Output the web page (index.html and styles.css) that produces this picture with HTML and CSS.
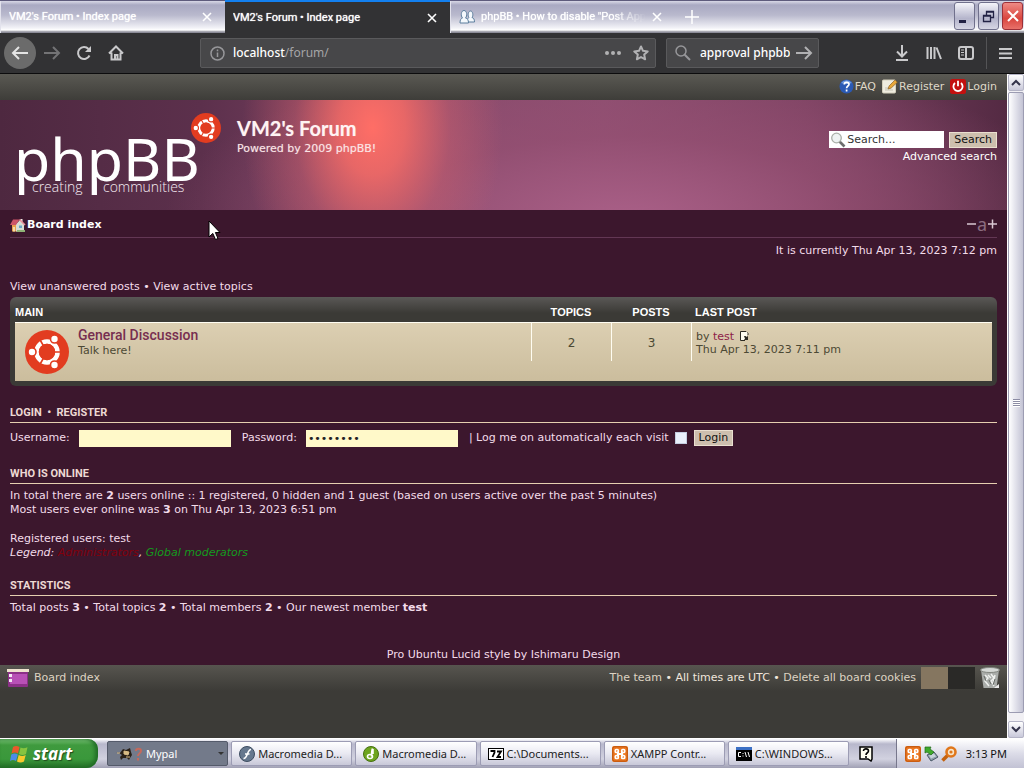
FILE: index.html
```html
<!DOCTYPE html>
<html lang="en">
<head>
<meta charset="utf-8">
<title>VM2's Forum • Index page</title>
<link rel="stylesheet" href="styles.css">
</head>
<body>
<svg class="defs" aria-hidden="true">
  <symbol id="friends" viewBox="0 0 44 44">
    <circle cx="22" cy="22" r="22" fill="#e23c20"/>
    <circle cx="22" cy="22" r="10.5" fill="none" stroke="#fff" stroke-width="4.6"/>
    <g stroke="#e23c20" stroke-width="1.6"><path d="M22 22h15M22 22L14 8M22 22l-8 14"/></g>
    <circle cx="22" cy="22" r="8.2" fill="#e23c20"/>
    <g fill="#fff" stroke="#e23c20" stroke-width="1.6"><circle cx="7" cy="22" r="4"/><circle cx="29.5" cy="9" r="4"/><circle cx="29.5" cy="35" r="4"/></g>
  </symbol>
  <symbol id="xampp" viewBox="0 0 16 16">
    <rect width="16" height="16" rx="2" fill="#ee7a24"/><rect x=".8" y=".8" width="14.4" height="14.4" rx="1.5" fill="none" stroke="#b8500c"/>
    <path d="M6 5.5v5M10 5.500v5M5.5 8h5" stroke="#fff" stroke-width="2"/><g fill="none" stroke="#fff" stroke-width="1.700"><rect x="3.300" y="3.500" width="3" height="3" rx="1"/><rect x="9.700" y="3.500" width="3" height="3" rx="1"/><rect x="3.300" y="9.500" width="3" height="3" rx="1"/><rect x="9.700" y="9.500" width="3" height="3" rx="1"/></g>
  </symbol>
  <symbol id="cross" viewBox="0 0 10 10"><path d="M1 1l8 8M9 1L1 9" stroke="currentColor" stroke-width="1.6" fill="none"/></symbol>
</svg>

<header class="tabstrip">
  <div class="tab"><span class="tab-title">VM2's Forum • Index page</span><button class="tab-close" aria-label="Close tab"><svg width="10" height="10"><use href="#cross"/></svg></button></div>
  <div class="tab active"><span class="tab-title">VM2's Forum • Index page</span><button class="tab-close" aria-label="Close tab"><svg width="10" height="10"><use href="#cross"/></svg></button></div>
  <div class="tab">
    <svg width="16" height="16" viewBox="0 0 16 16" fill="#f4f8fc" stroke="#5d7f9e" stroke-width="1"><path d="M8 12c0-2 1-3 2-3.500C8.500 7 9 2 11.500 2S14.500 7 13 8.500c1.500.500 2.500 1.500 2.500 4.500H9z"/><path d="M1 14c0-3 .800-4.500 2.500-5C1.500 7 2 1.500 5 1.500S8.500 7 6.500 9C8.500 9.500 9.500 11 9.500 14z"/></svg>
    <span class="tab-title fade">phpBB • How to disable "Post App</span><button class="tab-close" aria-label="Close tab"><svg width="10" height="10"><use href="#cross"/></svg></button></div>
  <button class="newtab" aria-label="New tab"><svg width="14" height="14" viewBox="0 0 14 14"><path d="M7 0v14M0 7h14" stroke="#fff" stroke-width="1.500"/></svg></button>
  <div class="winbtns">
    <button class="win" aria-label="Minimize"><svg width="20" height="24"><path d="M4 17.500h7" stroke="#222244" stroke-width="3"/></svg></button>
    <button class="win" aria-label="Restore"><svg width="20" height="24" fill="none" stroke="#222244" stroke-width="1.300"><path d="M7.500 11V7.500h7v6H12M7 8h8"/><path d="M4.500 11.500h7v6h-7zM4 12h8"/></svg></button>
    <button class="win red" aria-label="Close"><svg width="20" height="24"><path d="M5 7l10 10M15 7L5 17" stroke="#fff" stroke-width="2"/></svg></button>
  </div>
</header>

<nav class="toolbar">
  <button class="ib back" aria-label="Back"><svg width="18" height="16" viewBox="0 0 18 16"><path d="M17 8H2M8 2L2 8l6 6"/></svg></button>
  <button class="ib dim" aria-label="Forward"><svg width="18" height="16" viewBox="0 0 18 16"><path d="M1 8h15M10 2l6 6-6 6"/></svg></button>
  <button class="ib" aria-label="Reload"><svg width="16" height="16" viewBox="0 0 16 16"><path d="M13.500 10.500A6 6 0 1 1 12.500 4"/><path d="M15 1v6H9z" fill="currentColor" stroke="none"/></svg></button>
  <button class="ib" aria-label="Home"><svg width="16" height="16" viewBox="0 0 16 16"><path d="M1 8.500L8 1.500l7 7M3.500 7.500V14.500h9V7.500M7 14v-4h2.500v4"/></svg></button>
  <div class="urlbar">
    <svg width="15" height="15" viewBox="0 0 15 15" class="info"><circle cx="7.500" cy="7.500" r="6.500"/><path d="M7.500 6.500V11M7.500 3.500v1.700"/></svg>
    <span class="url"><b>localhost</b>/forum/</span>
    <button class="ib sm" aria-label="Page actions"><svg width="16" height="6"><g fill="currentColor" stroke="none"><circle cx="2" cy="3" r="2"/><circle cx="8" cy="3" r="2"/><circle cx="14" cy="3" r="2"/></g></svg></button>
    <button class="ib sm" aria-label="Bookmark"><svg width="16" height="16" viewBox="0 0 16 16"><path stroke-linejoin="round" d="M8 1.500l2 4.300 4.700.600-3.500 3.200.900 4.700L8 12l-4.100 2.300.900-4.700L1.300 6.400 6 5.800z"/></svg></button>
  </div>
  <div class="searchbar">
    <svg width="16" height="16" viewBox="0 0 16 16" class="info"><circle cx="6" cy="6" r="5"/><path d="M9.700 9.700L15 15" stroke-width="2"/></svg>
    <input type="text" value="approval phpbb" aria-label="Search the web">
    <button class="ib sm" aria-label="Go"><svg width="17" height="16" viewBox="0 0 17 16"><path d="M0 8h15M9 2l6 6-6 6"/></svg></button>
  </div>
  <div class="tools">
    <button class="ib" aria-label="Downloads"><svg width="14" height="16" viewBox="0 0 14 16"><path d="M7 0v11M2 6.500l5 5 5-5M1 15h12"/></svg></button>
    <button class="ib" aria-label="Library"><svg width="16" height="16" viewBox="0 0 16 16"><path d="M1.500 2v12M5 2v12M8.500 2v12M10.500 2.500l4.500 11.500"/></svg></button>
    <button class="ib" aria-label="Sidebars"><svg width="16" height="14" viewBox="0 0 16 14"><rect x="1" y="1" width="14" height="12" rx="2"/><path d="M8 1v12"/><path d="M3 4h3M3 6.500h3M3 9h3" stroke-width="1"/></svg></button>
    <button class="ib menu" aria-label="Menu"><svg width="13" height="13"><path d="M0 2h13M0 6.500h13M0 11h13"/></svg></button>
  </div>
</nav>

<div class="viewport">
  <main class="page">
    <div class="topbar">
      <a href="#"><svg width="15" height="15" viewBox="0 0 15 15"><circle cx="7.500" cy="7.500" r="7" fill="#2a59b4"/><path d="M2 4a7 7 0 0 1 11 0Q7 6 2 4" fill="#6f9ae0"/><path d="M5.300 5.500C5.300 2.500 10 2.700 10 5.300 10 7 7.600 7 7.600 9.200M7.600 10.600v1.800" fill="none" stroke="#fff" stroke-width="1.700"/></svg>FAQ</a>
      <a href="#"><svg width="16" height="15" viewBox="0 0 16 15"><rect x=".5" y="1" width="13" height="13" rx="1" fill="#efece0" stroke="#d5d0bd"/><path d="M3 9h6M3 11h8" stroke="#c5c1b2"/><path d="M6 10l1.200-3.200L13 1l2.300 2.200L9.200 9z" fill="#e9a83a" stroke="#8e6426" stroke-width=".7"/></svg>Register</a>
      <a href="#"><svg width="16" height="15" viewBox="0 0 16 15"><rect width="16" height="15" rx="2.500" fill="#c3100f"/><path d="M5 4a4.600 4.600 0 1 0 6 0M8 1.800v5.500" fill="none" stroke="#fff" stroke-width="1.800"/></svg>Login</a>
    </div>

    <div class="banner">
      <a href="#" class="logo" aria-label="phpBB creating communities">
        <svg width="211" height="90" viewBox="0 0 211 90">
          <text class="logo-name" x="4" y="70">phpBB</text>
          <text class="logo-tag" x="22" y="81">creating</text>
          <text class="logo-tag" x="93" y="81">communities</text>
          <use href="#friends" x="181" y="2" width="30" height="30"/>
        </svg>
      </a>
      <div class="site"><h1>VM2's Forum</h1><p>Powered by 2009 phpBB!</p></div>
      <form class="find">
        <div class="find-row">
          <label class="find-box"><svg width="16" height="16" viewBox="0 0 16 16"><path d="M9.500 9.500l5 5" stroke="#6d6d6d" stroke-width="2.600"/><circle cx="6.500" cy="6" r="4.800" fill="#eef3f2" stroke="#aab0a8" stroke-width="1.300"/></svg><input type="text" value="Search..." aria-label="Search keywords"></label>
          <button type="button" class="btn">Search</button>
        </div>
        <a href="#">Advanced search</a>
      </form>
    </div>

    <div class="wrap">
      <div class="crumbs">
        <a href="#"><svg width="16" height="16" viewBox="0 0 16 16"><path d="M2 8v6.500h5V8z" fill="#e8a04f"/><path d="M6 7l4-4 4 4v7.500H6z" fill="#d8ddd4"/><path d="M10.500 2h2v3h-2z" fill="#e9e6e0"/><path d="M0 8l3-5.500h6.500L6 8z" fill="#cc5568"/><path d="M9.500 2.500L15 8" stroke="#e78b98" stroke-width="1.600"/><path d="M3 10h2v4.500H3z" fill="#f6d9a5"/><path d="M9 8.500h3v2.500H9z" fill="#6aa7c6"/><path d="M7 13h8v2H7z" fill="#8fb276"/></svg>Board index</a>
        <a href="#" class="fontsize" aria-label="Change font size"><svg width="30" height="24"><path d="M0 11h9" stroke="#d9c9d3" stroke-width="1.500"/><text x="10" y="18">a</text><path d="M21 11h9M25.500 6.500v9" stroke="#d9c9d3" stroke-width="1.500"/></svg></a>
      </div>
      <p class="now">It is currently Thu Apr 13, 2023 7:12 pm</p>
      <p class="views"><a href="#">View unanswered posts</a> • <a href="#">View active topics</a></p>

      <div class="forabg">
        <table>
          <colgroup><col><col class="c-num"><col class="c-num"><col class="c-last"></colgroup>
          <thead><tr><th>Main</th><th class="mid">Topics</th><th class="mid">Posts</th><th class="lp">Last post</th></tr></thead>
          <tbody><tr>
            <td><div class="forum"><svg width="44" height="44"><use href="#friends" width="44" height="44"/></svg><div><a href="#" class="forumtitle">General Discussion</a><p>Talk here!</p></div></div></td>
            <td><div class="cell num">2</div></td>
            <td><div class="cell num">3</div></td>
            <td><div class="cell last"><p>by <a href="#">test</a> <svg width="9" height="10" viewBox="0 0 9 10"><path d="M.5.500H6l2 2V4M5 9.500H.500V.500" fill="#fffdf0" stroke="#2c2a22"/><path d="M1 1h6v7H1z" fill="#fffdf0"/><path d="M4 5h1.500l1.500 1 1-1.500V9H4l1-1.300z" fill="#2c2a22"/></svg></p><p>Thu Apr 13, 2023 7:11 pm</p></div></td>
          </tr></tbody>
        </table>
      </div>

      <h3><a href="#">Login</a>&nbsp; •&nbsp; <a href="#">Register</a></h3>
      <form class="quick">
        <label for="user">Username:</label><input id="user" class="field" type="text">
        <label for="pass" class="gap">Password:</label><input id="pass" class="field" type="password" value="password">
        <label for="auto" class="gap">| Log me on automatically each visit</label><input id="auto" class="tick" type="checkbox">
        <button type="button" class="btn">Login</button>
      </form>

      <h3>Who is online</h3>
      <p>In total there are <b>2</b> users online :: 1 registered, 0 hidden and 1 guest (based on users active over the past 5 minutes)<br>Most users ever online was <b>3</b> on Thu Apr 13, 2023 6:51 pm</p>
      <p class="legend">Registered users: <a href="#">test</a><br><em>Legend: <a href="#" class="adm">Administrators</a>, <a href="#" class="mod">Global moderators</a></em></p>

      <h3>Statistics</h3>
      <p>Total posts <b>3</b> • Total topics <b>2</b> • Total members <b>2</b> • Our newest member <a href="#"><b>test</b></a></p>
      <p class="credit">Pro Ubuntu Lucid style by <a href="#">Ishimaru Design</a></p>
    </div>

    <footer class="foot">
      <a href="#" class="foot-home"><svg width="22" height="20" viewBox="0 0 22 20"><rect x="1" y="2" width="20" height="17" rx="1" fill="#8c3088"/><rect x="3" y="6" width="17" height="10" fill="#b850b6"/><rect y="1" width="22" height="3" fill="#efe3cf"/><path d="M2 6h3v3H2zM2 11h3v3H2z" fill="#f3e6f3"/></svg>Board index</a>
      <p class="foot-links"><a href="#">The team</a> • All times are UTC • <a href="#">Delete all board cookies</a></p>
      <span class="swatches"><i class="sand"></i><i class="dark"></i></span>
      <svg class="trash" width="20" height="22" viewBox="0 0 20 22"><path d="M1 3h18l-2.500 18h-13z" fill="#a9aca9"/><ellipse cx="10" cy="3" rx="9.500" ry="2.500" fill="#d5d8d5" stroke="#82857f"/><path d="M5 8l3 3-3 3 4 5M11 7l3 4-3 3 3 5M8 8l3 3M15 8l-2 8" stroke="#eef0ee" stroke-width="1.500" fill="none"/><path d="M4 9l2 5M9 13l2 4M15 12l-2 6" stroke="#666a66" fill="none"/><path d="M14 21l5-4v4z" fill="#eee"/></svg>
    </footer>
  </main>
  <div class="scroll">
    <button aria-label="Scroll up"><svg width="10" height="7"><path d="M1 6l4-4 4 4"/></svg></button>
    <div class="thumb"><i></i></div>
    <button aria-label="Scroll down"><svg width="10" height="7"><path d="M1 1l4 4 4-4"/></svg></button>
  </div>
  <svg class="pointer" width="13" height="21" viewBox="0 0 13 21"><path d="M1 1v16l3.800-3.600L7.500 19.500l2.500-1-2.600-6H12z" fill="#fff" stroke="#000"/></svg>
</div>

<footer class="taskbar">
  <button class="start"><svg width="19" height="18" viewBox="0 0 19 18"><path d="M3 2q3-2 6.500 0L8 8.500Q5 6.500 1.500 8.500z" fill="#e9592b"/><path d="M10.500 2.500q3 1.800 7-.300L16 9q-3.500 2-7 0z" fill="#86c440"/><path d="M1.300 9.500q3.500-2 6.500 0L6 16q-3-2-6 0z" fill="#4d8be8"/><path d="M8.700 10q3.500 2 7 0L14 16.500q-3.500 2-7 0z" fill="#f8c92c"/></svg>start</button>
  <div class="tasks">
    <button class="task on"><svg width="28" height="16" viewBox="0 0 28 16"><path d="M1 6l4 1 3-4 3 1 4-2 1 4 1 3-2 3-1 2-2-2H8l-2 2-1-3 2-2-3-2z" fill="#2b2118"/><path d="M9 5l5 1-1 3-4-1zM2 7h3M11 11h4" fill="#d9bb84" stroke="#d9bb84"/><path d="M21 5C21 2 26 2 26 5c0 2.500-3 2-3 5M23 12v2.500" fill="none" stroke="#c4695c" stroke-width="2"/></svg><span>Mypal</span><i class="caret"></i></button>
    <button class="task"><svg width="16" height="16" viewBox="0 0 16 16"><circle cx="8" cy="8" r="7.500" fill="#66788e" stroke="#3d4d60"/><path d="M12 3.500c-4 0-3 9-7.500 9M6 8h4.500" fill="none" stroke="#fff" stroke-width="1.600"/></svg><span>Macromedia D...</span></button>
    <button class="task"><svg width="16" height="16" viewBox="0 0 16 16"><circle cx="8" cy="8" r="7.500" fill="#6ea51f" stroke="#457010"/><path d="M9.500 2.500c-1 2-1 4-1 8M10 3v5" fill="none" stroke="#fff" stroke-width="1.600"/><ellipse cx="7" cy="10.500" rx="2.500" ry="2" fill="none" stroke="#fff" stroke-width="1.600"/></svg><span>Macromedia D...</span></button>
    <button class="task"><svg width="16" height="12" viewBox="0 0 16 12"><rect x=".500" y=".500" width="15" height="11" fill="#fff" stroke="#000"/><path d="M2.500 3h4v1.500L4.500 9M9 3.500h4L9.500 9H13" fill="none" stroke="#000" stroke-width="1.800"/></svg><span>C:\Documents...</span></button>
    <button class="task"><svg width="16" height="16"><use href="#xampp"/></svg><span>XAMPP Contr...</span></button>
    <button class="task"><svg width="16" height="14" viewBox="0 0 16 14"><rect width="16" height="14" fill="#000"/><path d="M0 0h16v3H0z" fill="#3b6fc4"/><path d="M5 5.500H2.500v4H5M7 6v1M7 8.500v1M9 5l1.500 5M12 5l1.500 5" stroke="#fff" fill="none"/></svg><span>C:\WINDOWS...</span></button>
  </div>
  <button class="help" aria-label="Help"><svg width="14" height="16" viewBox="0 0 14 16"><path d="M1 1h12v12l-1 2-3-2H1z" fill="#fffff0" stroke="#000" stroke-width="1.500"/><path d="M4.500 5c0-3 5-2.600 5 0 0 2-2.500 1.500-2.500 4M7 10v2" fill="none" stroke="#000" stroke-width="1.600"/></svg></button>
  <div class="tray">
    <svg width="16" height="16"><use href="#xampp"/></svg>
    <svg width="16" height="16" viewBox="0 0 16 16"><path d="M4 9l7-3 4 5-7 4z" fill="#8fa0ae" stroke="#4c5a68"/><path d="M6 9.500l5-2 2 3-5 2z" fill="#c8d3dc"/><path d="M2 1l6 0-1 2 4 3-3 3-4-3-2 1z" fill="#3faa2d" stroke="#1f6a18" stroke-width=".7"/></svg>
    <svg width="16" height="16" viewBox="0 0 16 16"><path d="M7 9l-5.500 5.500" stroke="#c4620e" stroke-width="3.500"/><circle cx="10" cy="6" r="4.500" fill="#f7e4c8" stroke="#e0761a" stroke-width="2.600"/><circle cx="10" cy="6" r="1.600" fill="#e0761a"/></svg>
    <time>3:13 PM</time>
  </div>
</footer>
</body>
</html>
```

FILE: styles.css
```css
* { box-sizing: border-box; }
body {
  margin: 0;
  min-height: 100vh;
  display: flex;
  flex-direction: column;
  font: 11px/14px "DejaVu Sans", Verdana, sans-serif;
  color: #f3dcea;
  background: #3c172d;
}
p, h1, h3 { margin: 0; }
a { color: inherit; text-decoration: none; }
button, input { font: inherit; color: inherit; }
button { border: 0; padding: 0; background: none; }
svg { flex: none; }
.defs { position: absolute; width: 0; height: 0; }

/* Browser chrome */
.tabstrip {
  display: flex;
  height: 33px;
  font: 11px/14px Roboto, Tahoma, sans-serif;
  color: #fff;
  border-top: 1px solid #5e5b7c;
  background: linear-gradient(#d8d8e6 0, #a9a9c2 4px, #b9b9cd 14px, #f2f2f7 27px, #fff 29px, #8c8c98 31px);
}
.tab {
  flex: 0 1 225px;
  min-width: 0;
  display: flex;
  align-items: center;
  gap: 6px;
  padding: 0 13px 0 8px;
  border-left: 1px solid #e2e2ec;
}
.tab:last-of-type { border-right: 1px solid #d5d5e2; }
.tab.active { background: #323234; border-left: 0; margin-top: -1px; border-top: 2px solid #1380f0; }
.tab-title { flex: 1; min-width: 0; overflow: hidden; white-space: nowrap; text-shadow: 0 0 1px currentColor; }
.tab-title.fade { -webkit-mask-image: linear-gradient(90deg, #000 80%, transparent); mask-image: linear-gradient(90deg, #000 80%, transparent); }
.tab-close { display: flex; }
.newtab { display: flex; align-items: center; padding: 0 10px; }
.winbtns { margin-left: auto; display: flex; gap: 3px; padding: 1px 1px; }
.win {
  width: 21px;
  height: 28px;
  display: flex;
  align-items: center;
  border: 1px solid #70708c;
  border-radius: 3px;
  background: linear-gradient(#f4f4fa, #b4b4cb 60%, #d6d6e4);
}
.win.red { border-color: #9c3038; background: linear-gradient(#ee8a84, #d9463f 60%, #e8716a); }

.toolbar {
  display: flex;
  align-items: center;
  height: 41px;
  padding: 0 12px 0 4px;
  background: #323234;
  border-bottom: 1px solid #0c0c0d;
  font: 12px/16px "Noto Sans", Tahoma, sans-serif;
}
.ib { width: 32px; height: 32px; display: flex; align-items: center; justify-content: center; color: #c9c9cb; }
.ib svg { fill: none; stroke: currentColor; stroke-width: 2; }
.back { border-radius: 50%; background: #6b6b6b; color: #e4e4e4; }
.dim { color: #737375; }
.sm { width: 28px; color: #b1b1b3; }
.info { fill: none; stroke: #97979a; stroke-width: 1.5; }
.urlbar, .searchbar {
  display: flex;
  align-items: center;
  height: 30px;
  background: #474749;
  border: 1px solid #5a5a5c;
  border-radius: 2px;
}
.urlbar { flex: 1; margin: 0 10px 0 68px; padding: 0 0 0 9px; }
.url { flex: 1; padding-left: 8px; color: #a5a5a7; }
.url b { color: #fff; font-weight: 500; }
.searchbar { width: 153px; padding-left: 8px; }
.searchbar input { flex: 1; min-width: 0; margin-left: 9px; padding: 0; border: 0; background: none; color: #fff; outline: 0; font-weight: 500; }
.tools { display: flex; margin-left: 67px; }
.tools .menu { box-sizing: content-box; width: 13px; margin-left: 4px; padding-left: 12px; border-left: 1px solid #545456; }

.viewport { position: relative; flex: 1; display: flex; }
.page { flex: 1; min-width: 0; display: flex; flex-direction: column; }

/* Scroll bar */
.scroll { width: 17px; display: flex; flex-direction: column; border-left: 1px solid #fff; background: #f1f0f4; }
.scroll button { height: 17px; display: flex; align-items: center; justify-content: center; border: 1px solid #b4b4c6; border-radius: 2px; background: linear-gradient(#fff, #c9c9da); }
.scroll svg { fill: none; stroke: #33334a; stroke-width: 2; }
.thumb { flex: 1; margin: 1px 0 8px; display: flex; align-items: center; justify-content: center; border: 1px solid #9c9cb2; border-radius: 2px; background: linear-gradient(90deg, #fff, #e6e6ee 40%, #c3c3d4); }
.thumb i { width: 7px; height: 8px; background: repeating-linear-gradient(#8c8ca4 0 1px, #fff 1px 2px); }

/* Forum header */
.topbar {
  display: flex;
  justify-content: flex-end;
  align-items: center;
  gap: 6px;
  height: 26px;
  padding: 0 10px 1px;
  color: #dfd8c8;
  background: linear-gradient(#5a5953, #3e3d39);
}
.topbar a { display: flex; align-items: center; gap: 1px; }
.banner {
  display: flex;
  align-items: flex-start;
  min-height: 110px;
  padding: 11px 10px 0;
  background:
    radial-gradient(ellipse 130px 190px at 37% 25%, #ff6e66 0, rgba(248, 108, 102, .85) 25%, rgba(215, 98, 108, .4) 60%, rgba(160, 85, 115, 0) 100%),
    radial-gradient(ellipse 460px 170px at 62% 110%, #aa6088 0, rgba(150, 80, 115, .7) 50%, rgba(130, 70, 100, 0) 100%),
    linear-gradient(90deg, #4e2840, #5c304c 20%, #85496a 42%, #8c4e70 60%, #7c4262 80%, #542a43);
}
.logo svg { display: block; }
.logo-name { font: 59px "Noto Sans", sans-serif; fill: #fff; }
.logo-tag { font: 300 14px "Open Sans", sans-serif; fill: #f6ecf3; }
.site { flex: 1; padding: 5px 0 0 16px; color: #fbe4e6; text-shadow: 0 0 1px rgba(255, 255, 255, .4); }
.site h1 { font: bold 20px/24px Lato, "Trebuchet MS", sans-serif; color: #fff3f3; margin-bottom: 2px; }
.find { padding-top: 20px; display: flex; flex-direction: column; align-items: flex-end; gap: 2px; color: #fff; }
.find-row { display: flex; align-items: center; gap: 5px; }
.find-box { display: flex; align-items: center; width: 115px; height: 17px; padding-left: 1px; background: #fff; }
.find-box input { flex: 1; min-width: 0; padding: 0 1px; border: 0; outline: 0; background: none; color: #333; }
.btn { height: 16px; padding: 0 4px; border: 1px solid #eadfd0; background: #cdbfae; color: #111; line-height: 14px; }

.wrap { padding: 0 10px; }
.crumbs { display: flex; justify-content: space-between; align-items: center; height: 28px; padding-top: 2px; border-bottom: 1px solid #633754; color: #fff; font-weight: bold; }
.crumbs a { display: flex; align-items: center; gap: 1px; }
.fontsize text { font: 18px "Noto Sans", sans-serif; fill: #8b6d80; }
.now { margin-top: 6px; text-align: right; }
.views { margin: 22px 0 3px; }

.forabg { padding: 5px; border-radius: 6px; background: #3b3a36 linear-gradient(#5a5856, #3b3a36 16px); }
table { width: 100%; table-layout: fixed; border-collapse: collapse; }
.c-num { width: 80px; }
.c-last { width: 301px; }
th { height: 20px; padding: 0; text-align: left; text-transform: uppercase; color: #fff; font: bold 11px/14px "Liberation Sans", Arial, sans-serif; }
th.mid { text-align: center; }
th.lp { padding-left: 4px; }
tbody tr { background: linear-gradient(#dccfb2, #cbbd9d); border-top: 1px solid #fffdf2; color: #4c4934; }
td { height: 59px; padding: 0; vertical-align: top; }
.forum { display: flex; gap: 9px; padding: 7px 0 0 10px; }
.forum > div { margin-top: -3px; }
.forumtitle { display: block; font: 500 14px/17px Roboto, "Trebuchet MS", sans-serif; color: #772e50; }
.cell { height: 38px; border-left: 1px solid #fffdf2; }
.num { text-align: center; padding-top: 13px; font-size: 12px; }
.last { padding: 7px 0 0 4px; line-height: 13px; }
.last a { color: #8d2147; }
.last svg { margin-left: 2px; vertical-align: -1px; }

h3 { margin: 19px 0 5px; padding-bottom: 2px; border-bottom: 1px solid #e6cfb0; font: bold 11px/14px Roboto, Tahoma, sans-serif; text-transform: uppercase; color: #eed9d4; }
.forabg + h3 { margin-top: 20px; }
.quick { display: flex; align-items: center; min-height: 20px; white-space: nowrap; }
.field { width: 152px; height: 17px; margin-left: 9px; padding: 0 2px; border: 0; background: #fff9c9; color: #222; }
.gap { margin-left: 11px; }
.tick { appearance: none; width: 12px; height: 12px; margin: 0 7px 0 6px; background: #eaf0fb; border: 1px solid #c4cde0; }
.legend { margin-top: 15px; }
.adm { color: #82000c; }
.mod { color: #149a1e; }
.credit { margin: 33px 0 3px; text-align: center; }

.foot { flex: 1; display: flex; align-items: flex-start; min-height: 73px; padding: 2px 7px; color: #f0e6dc; line-height: 22px; background: #3c3b37 linear-gradient(#57554f, #3c3b37 26px); }
.foot a { color: #ddd3c2; }
.foot-home { display: flex; align-items: center; gap: 5px; }
.foot-links { margin-left: auto; }
.swatches { display: flex; margin: 0 5px; }
.swatches i { width: 27px; height: 22px; }
.sand { background: #857660; }
.dark { background: #2a2927; }

/* Desktop task bar */
.taskbar { display: flex; align-items: stretch; height: 30px; font: 11px/14px "Noto Sans", Tahoma, sans-serif; color: #222; border-top: 1px solid #fff; background: linear-gradient(#fdfdff, #b8b8cc 5px, #d2d2e0 20px, #a0a0b4); }
.start { width: 98px; display: flex; align-items: center; gap: 4px; padding-left: 10px; border-radius: 0 10px 12px 0; color: #fff; font: italic bold 17px/22px "Noto Sans", sans-serif; text-shadow: 1px 1px 1px #1f4a1c; background: linear-gradient(#7cc57a, #3f9a3e 6px, #3a983b 20px, #246e26); box-shadow: inset -3px 0 4px #1f6b24; }
.tasks { flex: 0 1 742px; min-width: 0; margin-left: 9px; display: flex; gap: 3px; padding: 2px 0; }
.task { flex: 1; min-width: 0; display: flex; align-items: center; gap: 3px; padding: 0 7px; white-space: nowrap; border: 1px solid #9c9cb4; border-radius: 2px; background: linear-gradient(#fff, #e9e9f2 50%, #c8c8d8); }
.task.on { color: #fff; border-color: #555b6b; background: #737a8a; }
.caret { margin-left: auto; margin-right: -4px; border: 3px solid transparent; border-top-color: #333; border-bottom: 0; }
.help { width: 47px; display: flex; align-items: center; padding-left: 10px; }
.tray { flex: 1; display: flex; align-items: center; justify-content: flex-end; gap: 2px; padding-right: 17px; border-left: 1px solid #77778c; background: linear-gradient(#fff, #dcdce8 50%, #c2c2d4); color: #111; }
.tray time { margin-left: 7px; }

.pointer { position: absolute; left: 208px; top: 146px; }
```
